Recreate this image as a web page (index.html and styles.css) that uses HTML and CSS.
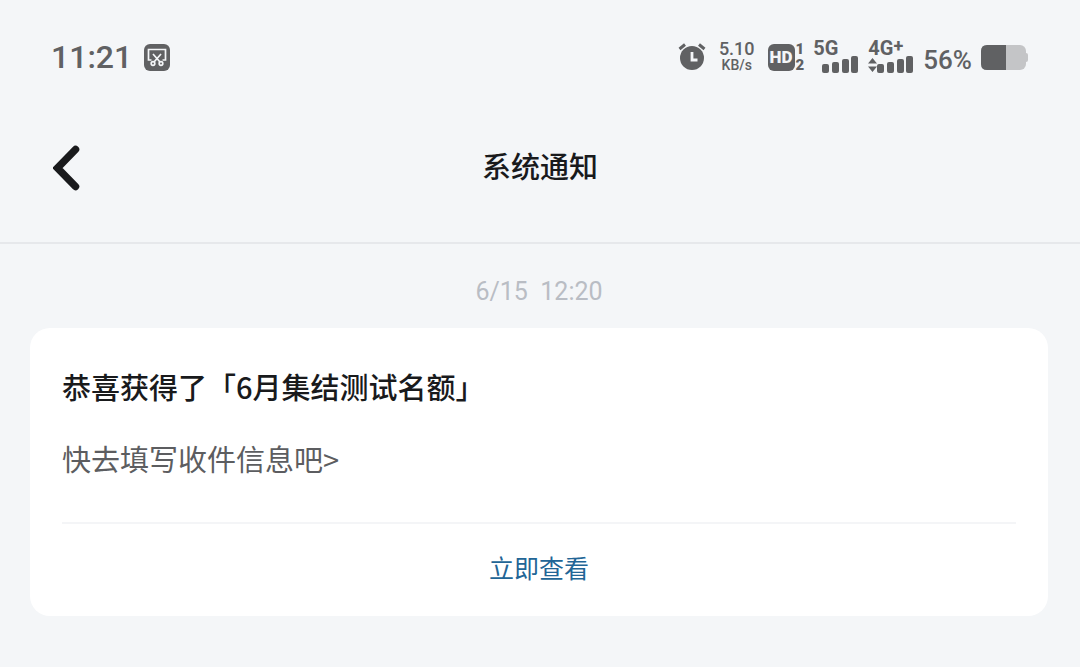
FILE: index.html
```html
<!DOCTYPE html>
<html lang="zh-CN">

<head>
  <meta charset="UTF-8" />
  <meta name="viewport" content="width=device-width, initial-scale=1.0" />
  <title>系统通知</title>
  <link rel="stylesheet" href="styles.css">
</head>

<body>
  <div class="status-bar">
    <div class="status-left">
      <span class="clock">11:21</span>
      <svg class="icon-screenshot" viewBox="0 0 26 27" width="26" height="27" aria-hidden="true">
        <rect width="26" height="27" rx="6" fill="#606163" />
        <g fill="none" stroke="#f4f6f8" stroke-width="1.700">
          <path d="M7.500 16H4.500V5.500H21.500V16H18.500" />
          <path d="M9 10L16 18M17 10L10 18" />
          <circle cx="9" cy="19.500" r="1.800" />
          <circle cx="17" cy="19.500" r="1.800" />
        </g>
      </svg>
    </div>

    <div class="status-right">
      <svg class="icon-alarm" viewBox="0 0 28 28" width="28" height="28" aria-hidden="true">
        <circle cx="14" cy="15" r="12" fill="#606163" />
        <path d="M1.500 6L7 1.500M26.500 6L21 1.500" stroke="#606163" stroke-width="3" />
        <path d="M14 9V17H19.500" fill="none" stroke="#f4f6f8" stroke-width="2.800" />
      </svg>
      <div class="net-speed">
        <span class="speed-value">5.10</span>
        <span class="speed-unit">KB/s</span>
      </div>
      <div class="hd">
        <span class="hd-badge">HD</span>
        <span class="hd-sims"><span>1</span><span>2</span></span>
      </div>
      <div class="signal">
        <span class="signal-type">5G</span>
        <svg class="signal-bars" viewBox="0 0 46 17" width="46" height="17" aria-hidden="true">
          <g fill="#606163">
            <rect x="9" y="8" width="7" height="9" rx="2" />
            <rect x="19" y="6" width="7" height="11" rx="2" />
            <rect x="29" y="3" width="7" height="14" rx="2" />
            <rect x="38" y="0" width="7" height="17" rx="2" />
          </g>
        </svg>
      </div>
      <div class="signal">
        <span class="signal-type">4G<sup>+</sup></span>
        <svg class="signal-bars" viewBox="0 0 46 17" width="46" height="17" aria-hidden="true">
          <g fill="#606163">
            <path d="M0 7.500L4.500 2L9 7.500ZM0 10.500L4.500 16L9 10.500Z" />
            <rect x="9" y="8" width="7" height="9" rx="2" />
            <rect x="19" y="6" width="7" height="11" rx="2" />
            <rect x="29" y="3" width="7" height="14" rx="2" />
            <rect x="38" y="0" width="7" height="17" rx="2" />
          </g>
        </svg>
      </div>
      <span class="battery-level">56%</span>
      <svg class="icon-battery" viewBox="0 0 47 25" width="47" height="25" aria-hidden="true">
        <rect width="45" height="25" rx="6" fill="#c4c5c7" />
        <rect x="43" y="8" width="4" height="9" rx="2" fill="#c4c5c7" />
        <path d="M6 0H25V25H6Q0 25 0 19V6Q0 0 6 0Z" fill="#606163" />
      </svg>
    </div>
  </div>

  <header class="nav-bar">
    <button class="back-btn" type="button" aria-label="返回">
      <svg viewBox="0 0 28 46" width="28" height="46" aria-hidden="true">
        <path d="M22.500 4.500L4.500 23L22.500 41.500" fill="none" stroke="#191a1c" stroke-width="7.500" stroke-linecap="round" />
      </svg>
    </button>
    <h1 class="nav-title">系统通知</h1>
  </header>

  <main class="messages">
    <time class="message-time">6/15&nbsp; 12:20</time>
    <article class="card">
      <h2 class="card-title">恭喜获得了「6月集结测试名额」</h2>
      <p class="card-text">快去填写收件信息吧&gt;</p>
      <a class="card-link" href="#">立即查看</a>
    </article>
  </main>
</body>

</html>
```

FILE: styles.css
```css
* {
  box-sizing: border-box;
}

body {
  margin: 0;
  min-height: 100vh;
  font-family: Roboto, "Noto Sans CJK SC", sans-serif;
  background: #f4f6f8;
  color: #191a1c;
}

/* status bar */
.status-bar {
  display: flex;
  justify-content: space-between;
  align-items: center;
  height: 94px;
  padding: 20px 52px 0 51px;
  color: #606163;
  font-weight: 500;
}

.status-left,
.status-right {
  display: flex;
  align-items: center;
}

.status-left {
  gap: 12px;
}

.status-right {
  gap: 9px;
}

.clock {
  font-size: 32px;
  line-height: 32px;
}

.net-speed {
  display: flex;
  flex-direction: column;
  align-items: center;
  margin: 0 4px;
}

.speed-value {
  font-size: 18px;
  line-height: 17px;
}

.speed-unit {
  font-size: 14px;
  line-height: 17px;
}

.hd {
  display: flex;
  align-items: center;
  gap: 1px;
}

.hd-badge {
  width: 27px;
  border-radius: 6px;
  background: #606163;
  color: #f4f6f8;
  font-size: 17px;
  font-weight: 900;
  line-height: 27px;
  text-align: center;
}

.hd-sims {
  display: flex;
  flex-direction: column;
  font-size: 15px;
  font-weight: 900;
  line-height: 16px;
}

.signal {
  display: flex;
  flex-direction: column;
  width: 46px;
}

.signal-type {
  font-size: 20px;
  font-weight: 700;
  line-height: 15px;
}

.signal-type sup {
  font-size: 18px;
  line-height: 0;
  vertical-align: 3px;
}

.battery-level {
  padding-top: 6px;
  font-size: 26px;
  line-height: 32px;
}

/* nav bar */
.nav-bar {
  display: grid;
  grid-template-columns: 1fr auto 1fr;
  align-items: center;
  height: 150px;
  padding: 0 53px;
  border-bottom: 2px solid #e6e8eb;
}

.back-btn {
  justify-self: start;
  padding: 0;
  border: none;
  background: none;
  cursor: pointer;
}

.back-btn svg {
  display: block;
}

.nav-title {
  margin: 0;
  font-size: 29px;
  font-weight: 500;
  line-height: 44px;
}

/* messages */
.messages {
  padding: 32px 32px 50px 30px;
}

.message-time {
  display: block;
  margin-bottom: 20px;
  color: #b9bdc4;
  font-size: 25px;
  line-height: 32px;
  text-align: center;
}

.card {
  padding: 36px 32px 6px;
  border-radius: 20px;
  background: #fff;
  font-family: "Noto Sans CJK SC", sans-serif;
}

.card-title {
  margin: 0 0 28px;
  font-size: 29px;
  font-weight: 500;
  line-height: 44px;
}

.card-text {
  margin: 0 0 42px;
  color: #5c5d60;
  font-size: 29px;
  line-height: 44px;
}

.card-link {
  display: block;
  border-top: 2px solid #f4f5f7;
  color: #226596;
  font-size: 25px;
  line-height: 86px;
  text-align: center;
  text-decoration: none;
}
```
